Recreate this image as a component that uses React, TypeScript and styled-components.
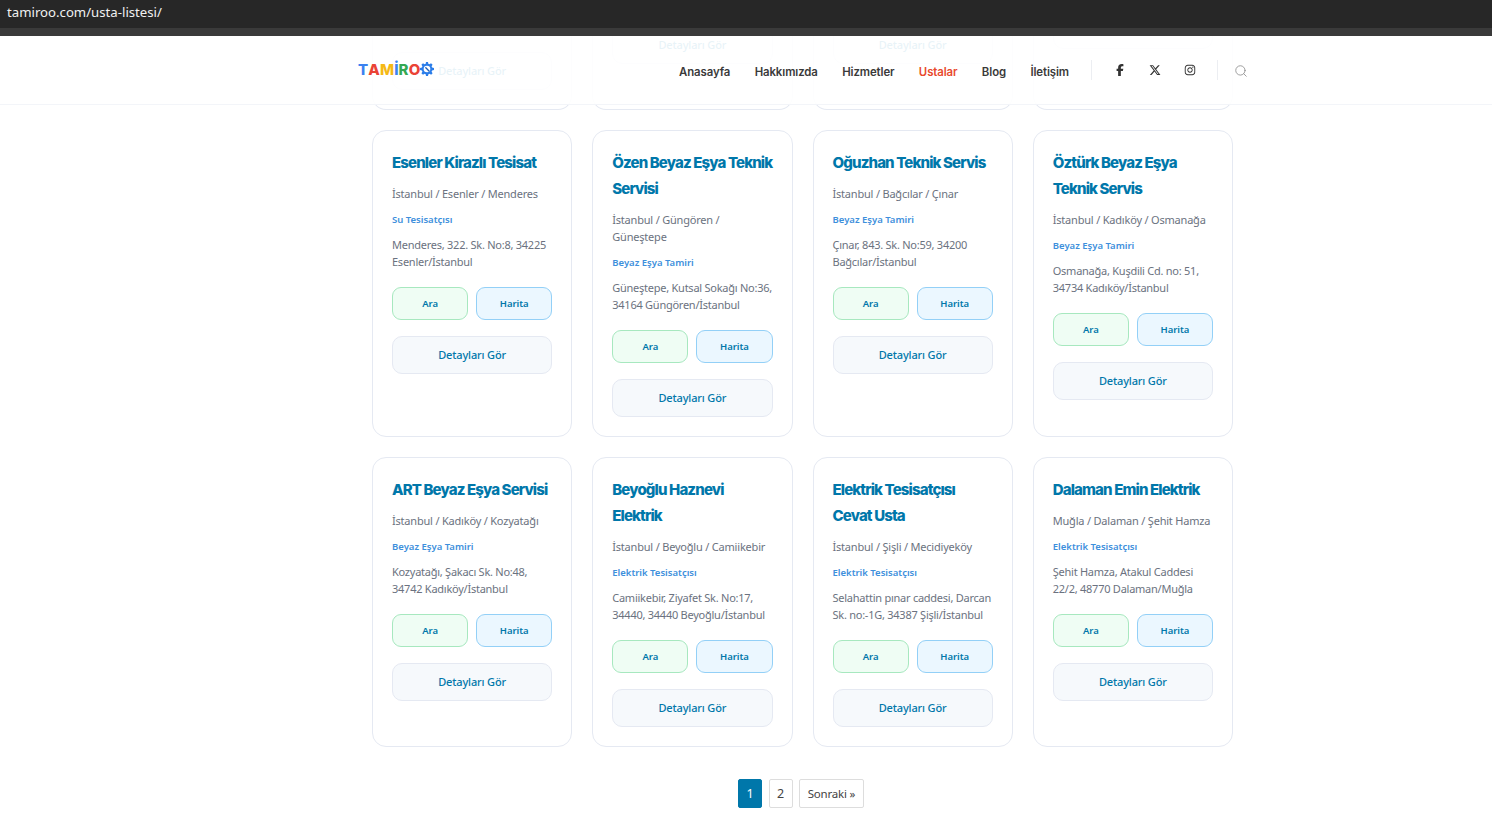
import React from "react";
import styled, { createGlobalStyle } from "styled-components";
import { FaFacebookF, FaInstagram, FaXTwitter } from "react-icons/fa6";
import { Search } from "lucide-react";

const Global = createGlobalStyle`
  html, body { margin: 0; padding: 0; background: #fff; height: 100%; overflow: hidden; }
  * { box-sizing: border-box; }
  body { font-family: "Noto Sans", "Open Sans", sans-serif; }
`;

const BrowserBar = styled.div`
  height: 36px;
  background: #272727;
  border-bottom: 8px solid #3a3a3a;
  color: #f1f1f1;
  font-family: "Noto Sans", sans-serif;
  font-size: 13.2px;
  line-height: 25px;
  padding-left: 7px;
`;

const Viewport = styled.div`
  position: relative;
  height: 793px;
  overflow: hidden;
`;

const Header = styled.header`
  position: absolute;
  top: 0;
  left: 0;
  right: 0;
  height: 69px;
  background: rgba(255, 255, 255, 0.91);
  border-bottom: 1px solid #f3f5f9;
  display: flex;
  align-items: center;
  padding: 0 0 0 358px;
  z-index: 2;
`;

const Logo = styled.div`
  display: flex;
  align-items: center;
  width: 321px;
  font-family: "Inter", sans-serif;
  font-weight: 800;
  font-size: 15px;
  letter-spacing: 0.1px;
  margin-top: -2px;
`;

const LogoLetter = styled.span<{ $c: string }>`
  color: ${(p) => p.$c};
`;

const Nav = styled.nav`
  display: flex;
  gap: 24.4px;
  margin-top: 3px;
`;

const NavLink = styled.a<{ $active?: boolean }>`
  font-family: "Inter", sans-serif;
  font-size: 11.4px;
  font-weight: 600;
  letter-spacing: -0.1px;
  color: ${(p) => (p.$active ? "#e8492d" : "#3a3a3a")};
`;

const Divider = styled.span<{ $ml: number }>`
  width: 1px;
  height: 20px;
  background: #eceef2;
  margin-left: ${(p) => p.$ml}px;
`;

const Socials = styled.div`
  display: flex;
  align-items: center;
  gap: 23px;
  margin-left: 22px;
  color: #333;
`;

const SocialItem = styled.span`
  width: 12px;
  height: 12px;
  display: flex;
  align-items: center;
  justify-content: center;
  font-size: 12px;
`;

const SearchWrap = styled.span`
  display: flex;
  margin-left: 16px;
  margin-top: 1px;
  color: #8a8a8a;
`;

const Content = styled.main`
  margin-top: -20px;
  margin-left: 372px;
  width: 861px;
`;

const Grid = styled.div`
  display: grid;
  grid-template-columns: repeat(4, 1fr);
  gap: 20px;
`;

const CardGrid = styled(Grid)`
  margin-top: 20px;
`;

const Card = styled.article`
  background: #fff;
  border: 1px solid #e5e9f2;
  border-radius: 14px;
  padding: 19px 19px 19px;
  display: flex;
  flex-direction: column;
`;

const ScrolledCard = styled(Card)<{ $bottom: number }>`
  height: 94px;
  border-top: none;
  border-radius: 0 0 14px 14px;
  padding-top: 0;
  padding-bottom: ${(p) => p.$bottom}px;
  justify-content: flex-end;
`;

const Title = styled.h3`
  margin: 0;
  font-family: "Inter", sans-serif;
  font-size: 15px;
  font-weight: 800;
  line-height: 26px;
  letter-spacing: -0.86px;
  color: #0077aa;
`;

const Location = styled.p`
  margin: 8.5px 0 0;
  font-size: 11px;
  letter-spacing: -0.2px;
  line-height: 17px;
  color: #6b7280;
`;

const Category = styled.p`
  margin: 9px 0 0;
  font-size: 9.5px;
  font-weight: 600;
  line-height: 17px;
  color: #3d8fdc;
`;

const Address = styled.p`
  margin: 8px 0 0;
  font-size: 11px;
  letter-spacing: -0.25px;
  line-height: 17px;
  color: #6b7280;
`;

const ButtonRow = styled.div`
  display: grid;
  grid-template-columns: 1fr 1fr;
  gap: 8px;
  margin-top: 17px;
`;

const ActionButton = styled.a<{ $kind: "call" | "map" }>`
  height: 33px;
  display: flex;
  align-items: center;
  justify-content: center;
  border-radius: 9px;
  font-size: 9.5px;
  font-weight: 600;
  color: #0077aa;
  background: ${(p) => (p.$kind === "call" ? "#effdf4" : "#ebf7ff")};
  border: 1px solid ${(p) => (p.$kind === "call" ? "#a7e8bf" : "#93d0f7")};
`;

const DetailButton = styled.a`
  height: 38px;
  flex: none;
  margin-top: 16.5px;
  padding-bottom: 2px;
  display: flex;
  align-items: center;
  justify-content: center;
  border-radius: 10px;
  background: #f6f9fc;
  border: 1px solid #e5e9f2;
  font-size: 11px;
  letter-spacing: -0.15px;
  font-weight: 500;
  color: #0077aa;
`;

const Pagination = styled.nav`
  display: flex;
  justify-content: center;
  gap: 6.5px;
  margin-top: 32px;
  padding-right: 3px;
`;

const PageItem = styled.a<{ $current?: boolean; $wide?: boolean }>`
  height: 29px;
  width: ${(p) => (p.$wide ? "65px" : "24px")};
  display: flex;
  align-items: center;
  justify-content: center;
  border-radius: 2px;
  font-size: ${(p) => (p.$wide ? "11.5px" : "12.5px")};
  letter-spacing: ${(p) => (p.$wide ? "-0.2px" : "0")};
  color: ${(p) => (p.$current ? "#fff" : "#444")};
  background: ${(p) => (p.$current ? "#0077aa" : "#fff")};
  border: 1px solid ${(p) => (p.$current ? "#0077aa" : "#dddddd")};
`;

type Item = { t: string; l: string; c: string; a: string };

const items: Item[] = [
  { t: "Esenler Kirazlı Tesisat", l: "İstanbul / Esenler / Menderes", c: "Su Tesisatçısı", a: "Menderes, 322. Sk. No:8, 34225 Esenler/İstanbul" },
  { t: "Özen Beyaz Eşya Teknik Servisi", l: "İstanbul / Güngören / Güneştepe", c: "Beyaz Eşya Tamiri", a: "Güneştepe, Kutsal Sokağı No:36, 34164 Güngören/İstanbul" },
  { t: "Oğuzhan Teknik Servis", l: "İstanbul / Bağcılar / Çınar", c: "Beyaz Eşya Tamiri", a: "Çınar, 843. Sk. No:59, 34200 Bağcılar/İstanbul" },
  { t: "Öztürk Beyaz Eşya Teknik Servis", l: "İstanbul / Kadıköy / Osmanağa", c: "Beyaz Eşya Tamiri", a: "Osmanağa, Kuşdili Cd. no: 51, 34734 Kadıköy/İstanbul" },
  { t: "ART Beyaz Eşya Servisi", l: "İstanbul / Kadıköy / Kozyatağı", c: "Beyaz Eşya Tamiri", a: "Kozyatağı, Şakacı Sk. No:48, 34742 Kadıköy/İstanbul" },
  { t: "Beyoğlu Haznevi Elektrik", l: "İstanbul / Beyoğlu / Camiikebir", c: "Elektrik Tesisatçısı", a: "Camiikebir, Ziyafet Sk. No:17, 34440, 34440 Beyoğlu/İstanbul" },
  { t: "Elektrik Tesisatçısı Cevat Usta", l: "İstanbul / Şişli / Mecidiyeköy", c: "Elektrik Tesisatçısı", a: "Selahattin pınar caddesi, Darcan Sk. no:-1G, 34387 Şişli/İstanbul" },
  { t: "Dalaman Emin Elektrik", l: "Muğla / Dalaman / Şehit Hamza", c: "Elektrik Tesisatçısı", a: "Şehit Hamza, Atakul Caddesi 22/2, 48770 Dalaman/Muğla" },
];

const scrolledBottoms = [
  { bottom: 19, label: "Detayları Gör" },
  { bottom: 45, label: "Detayları Gör" },
  { bottom: 45, label: "Detayları Gör" },
  { bottom: 60, label: "" },
];

const navLinks = ["Anasayfa", "Hakkımızda", "Hizmetler", "Ustalar", "Blog", "İletişim"];
const logoLetters: [string, string][] = [
  ["T", "#3b82f0"],
  ["A", "#ea4335"],
  ["M", "#f5b915"],
  ["İ", "#3b82f0"],
  ["R", "#34a853"],
  ["O", "#ea4335"],
];

const GearMark = () => (
  <svg width="14" height="14" viewBox="0 0 14 14" aria-hidden="true">
    <path
      fill="#2b7de9"
      d="M6 0h2l.3 1.7 1.2.5L11 1.2l1.6 1.6-1 1.5.5 1.2L14 6v2l-1.9.5-.5 1.2 1 1.5-1.5 1.6-1.5-1-1.2.5L8 14H6l-.3-1.7-1.2-.5-1.5 1L1.4 11.200l1-1.500-.5-1.200L0 8V6l1.900-.5.5-1.200-1-1.500L3 1.200l1.500 1 1.200-.5z"
    />
    <circle cx="7" cy="7" r="3.300" fill="#fff" />
    <path d="M5.800 5.800l3.200 3.200" stroke="#1f5fb8" strokeWidth="1.400" strokeLinecap="round" />
  </svg>
);

export default function App() {
  return (
    <>
      <Global />
      <BrowserBar>tamiroo.com/usta-listesi/</BrowserBar>
      <Viewport>
        <Header>
          <Logo>
            {logoLetters.map(([l, c]) => (
              <LogoLetter key={l + c} $c={c}>
                {l}
              </LogoLetter>
            ))}
            <GearMark />
          </Logo>
          <Nav>
            {navLinks.map((n) => (
              <NavLink key={n} $active={n === "Ustalar"}>
                {n}
              </NavLink>
            ))}
          </Nav>
          <Divider $ml={22} />
          <Socials>
            <SocialItem>
              <FaFacebookF />
            </SocialItem>
            <SocialItem>
              <FaXTwitter />
            </SocialItem>
            <SocialItem>
              <FaInstagram />
            </SocialItem>
          </Socials>
          <Divider $ml={21} />
          <SearchWrap>
            <Search size={14} strokeWidth={1.4} />
          </SearchWrap>
        </Header>
        <Content>
          <Grid>
            {scrolledBottoms.map((s, i) => (
              <ScrolledCard key={i} $bottom={s.bottom}>
                <DetailButton>{s.label}</DetailButton>
              </ScrolledCard>
            ))}
          </Grid>
          <CardGrid>
            {items.map((it) => (
              <Card key={it.t}>
                <Title>{it.t}</Title>
                <Location>{it.l}</Location>
                <Category>{it.c}</Category>
                <Address>{it.a}</Address>
                <ButtonRow>
                  <ActionButton $kind="call">Ara</ActionButton>
                  <ActionButton $kind="map">Harita</ActionButton>
                </ButtonRow>
                <DetailButton>Detayları Gör</DetailButton>
              </Card>
            ))}
          </CardGrid>
          <Pagination>
            <PageItem $current>1</PageItem>
            <PageItem>2</PageItem>
            <PageItem $wide>Sonraki »</PageItem>
          </Pagination>
        </Content>
      </Viewport>
    </>
  );
}
